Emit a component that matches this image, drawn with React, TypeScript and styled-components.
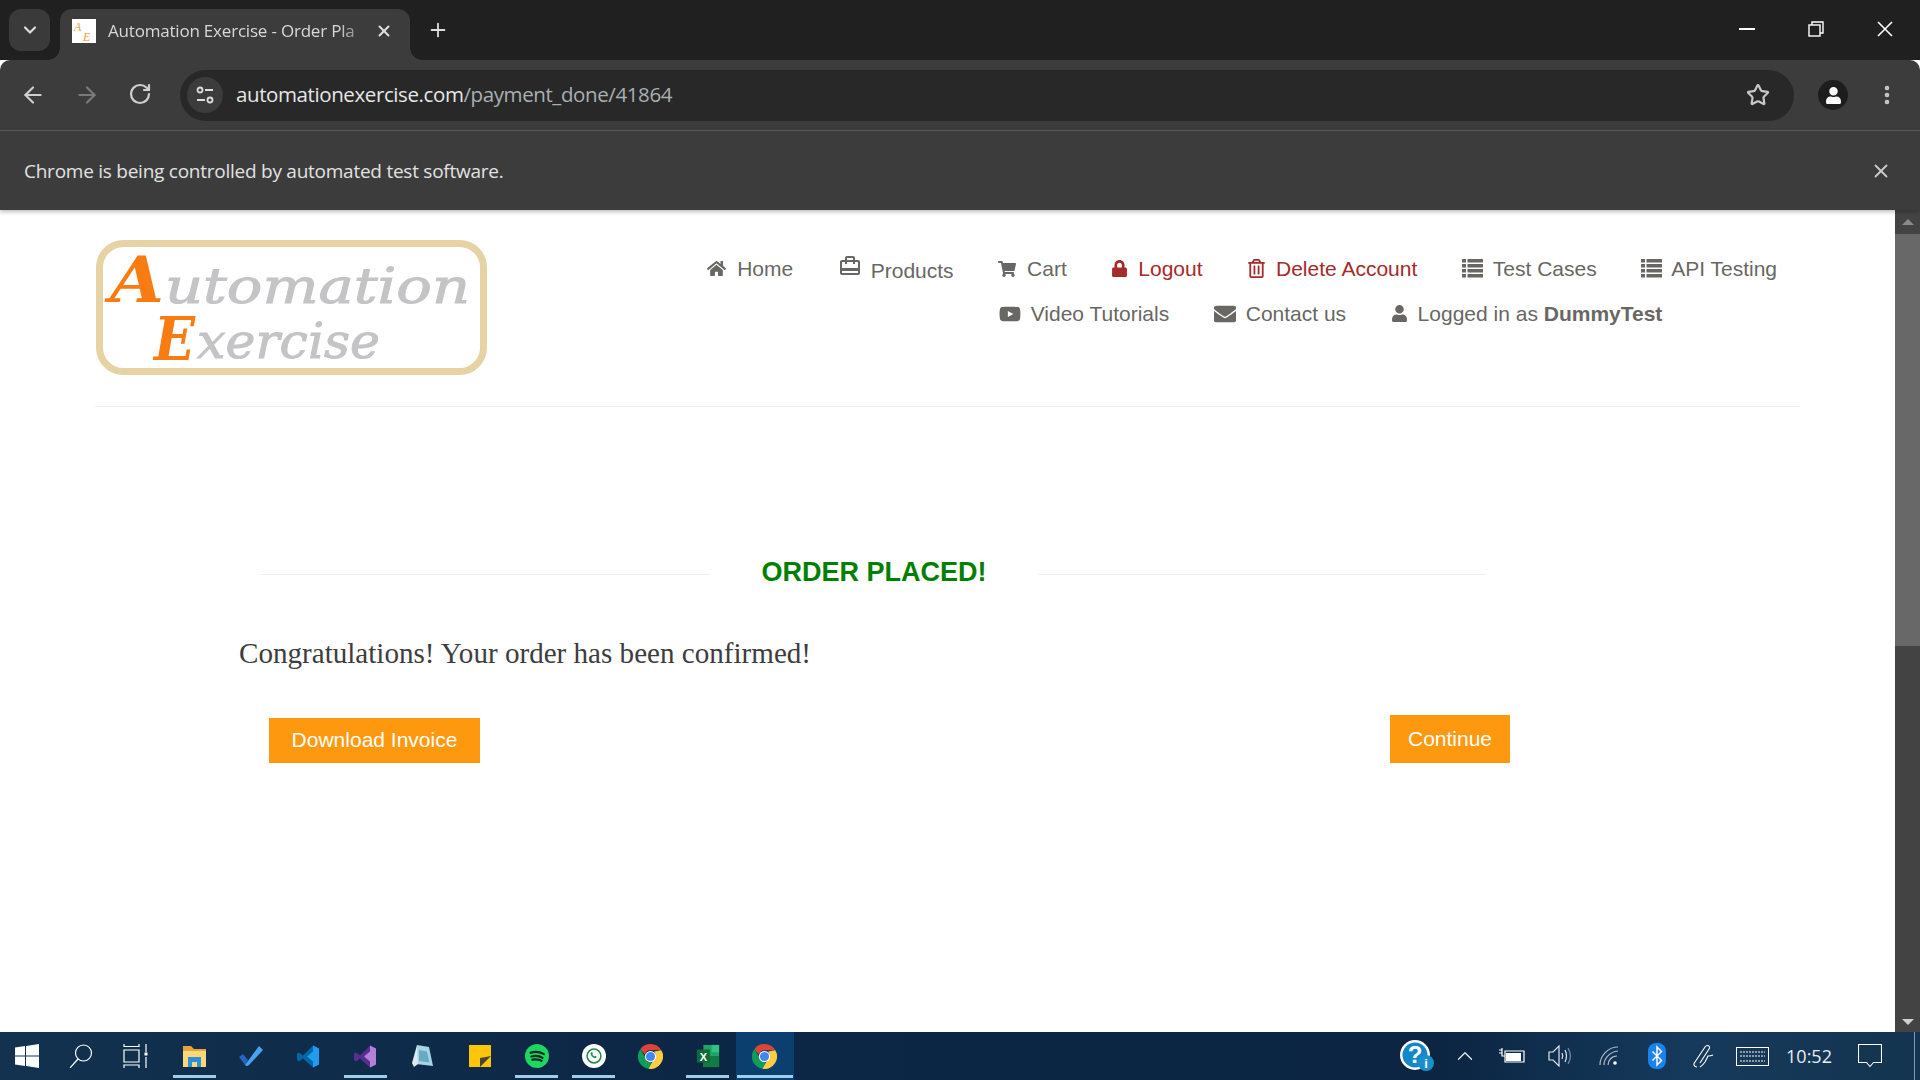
import * as React from 'react'
import styled, { createGlobalStyle } from 'styled-components'
import {
  FaHome,
  FaShoppingCart,
  FaLock,
  FaRegTrashAlt,
  FaYoutube,
  FaEnvelope,
  FaUser,
} from 'react-icons/fa'
import { MdOutlineCardTravel } from 'react-icons/md'
import { ChevronDown, X, Plus, ArrowLeft, ArrowRight, RotateCw, Star, EllipsisVertical, ChevronUp } from 'lucide-react'

const GlobalStyle = createGlobalStyle`
  html, body {
    margin: 0;
    padding: 0;
    height: 100%;
    overflow: hidden;
    background: #fff;
    font-family: "Liberation Sans", Arial, sans-serif;
  }
  #root { height: 100%; }
`

const Screen = styled.div`
  width: 1920px;
  height: 1080px;
  display: flex;
  flex-direction: column;
`

/* chrome */
const TabStrip = styled.div`
  height: 60px;
  background: #202020;
  display: flex;
  align-items: flex-start;
  flex: none;
`
const TabSearch = styled.div`
  width: 41px;
  height: 42px;
  margin: 9px 10px 0 9px;
  border-radius: 12px;
  background: #3a3a3a;
  color: #ddd;
  display: flex;
  align-items: center;
  justify-content: center;
  flex: none;
`
const Tab = styled.div`
  position: relative;
  width: 350px;
  height: 51px;
  margin-top: 9px;
  background: #3c3c3c;
  border-radius: 12px 12px 0 0;
  display: flex;
  align-items: center;
  padding: 0 17px 8px 12px;
  box-sizing: border-box;
  color: #d8d8d8;
  font: 17px "Open Sans", "Liberation Sans", sans-serif;
  letter-spacing: -0.2px;
  flex: none;
  &::before,
  &::after {
    content: '';
    position: absolute;
    bottom: 0;
    width: 12px;
    height: 12px;
  }
  &::before {
    left: -12px;
    background: radial-gradient(circle at 0 0, transparent 11.5px, #3c3c3c 12px);
  }
  &::after {
    right: -12px;
    background: radial-gradient(circle at 100% 0, transparent 11.5px, #3c3c3c 12px);
  }
`
const Favicon = styled.svg`
  width: 24px;
  height: 24px;
  flex: none;
  margin-right: 12px;
`
const TabTitle = styled.span`
  flex: 1;
  white-space: nowrap;
  -webkit-mask-image: linear-gradient(90deg, #000 86%, transparent 100%);
  mask-image: linear-gradient(90deg, #000 86%, transparent 100%);
`
const TabClose = styled(X)`
  flex: none;
  color: #e0e0e0;
`
const NewTab = styled.div`
  color: #ddd;
  margin: 19px 0 0 17px;
  flex: none;
`
const WinControls = styled.div`
  margin-left: auto;
  display: flex;
  align-items: center;
  gap: 53px;
  padding: 21px 27px 0 0;
`
const Toolbar = styled.div`
  height: 70px;
  background: #3c3c3c;
  border-bottom: 1px solid #5c5c5c;
  border-radius: 10px 10px 0 0;
  display: flex;
  align-items: center;
  padding-left: 20px;
  color: #c8c8c8;
  flex: none;
`
const NavBtn = styled.div<{ $dim?: boolean }>`
  width: 26px;
  height: 26px;
  margin-right: 28px;
  flex: none;
  color: ${(p) => (p.$dim ? '#7a7a7a' : '#cfcfcf')};
`
const Omnibox = styled.div`
  width: 1614px;
  height: 51px;
  margin-left: -2px;
  background: #282828;
  border-radius: 26px;
  display: flex;
  align-items: center;
  padding: 0 24px 0 7px;
  box-sizing: border-box;
  flex: none;
`
const SiteInfo = styled.div`
  width: 36px;
  height: 36px;
  border-radius: 50%;
  background: #3c3c3c;
  display: flex;
  align-items: center;
  justify-content: center;
  margin-right: 13px;
  flex: none;
`
const Url = styled.div`
  flex: 1;
  padding-bottom: 2px;
  font: 20.5px "Open Sans", "Liberation Sans", sans-serif;
  letter-spacing: -0.4px;
  color: #a9afb3;
  b {
    font-weight: 400;
    color: #e6e6e6;
  }
`
const Avatar = styled.div`
  width: 30px;
  height: 30px;
  border-radius: 50%;
  background: #1d1d1d;
  margin-left: 24px;
  flex: none;
  display: flex;
  align-items: center;
  justify-content: center;
`
const Kebab = styled.div`
  color: #c8c8c8;
  margin-left: 27px;
  flex: none;
  display: flex;
`
const InfoBar = styled.div`
  height: 79px;
  background: #3c3c3c;
  color: #e2e2e2;
  display: flex;
  align-items: center;
  justify-content: space-between;
  padding: 0 28px 0 24px;
  font: 19px "Open Sans", "Liberation Sans", sans-serif;
  letter-spacing: -0.25px;
  box-shadow: 0 2px 4px rgba(0, 0, 0, 0.25);
  position: relative;
  flex: none;
`

/* page */
const Viewport = styled.div`
  flex: 1;
  display: flex;
  min-height: 0;
`
const Page = styled.main`
  flex: 1;
  background: #fff;
  padding: 0 95px;
  min-width: 0;
`
const Header = styled.header`
  height: 197px;
  box-sizing: border-box;
  border-bottom: 1px solid #f0f0ef;
  display: flex;
  justify-content: space-between;
  padding-top: 30px;
`
const Logo = styled.svg`
  width: 391px;
  height: 135px;
  margin-left: 1px;
  flex: none;
`
const Nav = styled.nav`
  display: flex;
  flex-direction: column;
  gap: 20px;
  padding: 16px 23px 0 0;
  font-size: 21px;
  color: #696763;
`
const NavRow = styled.div<{ $indent?: number }>`
  display: flex;
  gap: 44.5px;
  height: 25px;
  align-items: center;
  margin-left: ${(p) => p.$indent ?? 0}px;
`
const NavItem = styled.a<{ $danger?: boolean; $gap?: number }>`
  display: flex;
  align-items: center;
  white-space: nowrap;
  gap: ${(p) => p.$gap ?? 10}px;
  color: ${(p) => (p.$danger ? '#a52a2a' : '#696763')};
  svg {
    flex: none;
  }
  b {
    font-weight: 700;
  }
`
const ProductsItem = styled(NavItem)`
  svg {
    transform: translateY(-3px);
  }
  span {
    transform: translateY(2px);
  }
`
const ListGlyph = styled.svg`
  width: 21px;
  height: 19px;
  fill: currentColor;
`
const Content = styled.section`
  padding: 150px 0 0 144px;
`
const TitleRow = styled.div`
  display: flex;
  align-items: center;
  width: 1225px;
  margin-left: 22px;
`
const Rule = styled.div<{ $w: number }>`
  width: ${(p) => p.$w}px;
  height: 1px;
  background: #eee;
  margin-top: 5px;
  flex: none;
`
const Title = styled.h2`
  margin: 0;
  width: 328px;
  flex: none;
  text-align: center;
  font-size: 27px;
  line-height: 30px;
  color: #008000;
  font-weight: 700;
`
const Message = styled.p`
  margin: 48px 0 0;
  font: 29.1px/36px "Liberation Serif", "Times New Roman", serif;
  color: #3d3d3d;
`
const Actions = styled.div`
  display: flex;
  justify-content: space-between;
  align-items: flex-end;
  width: 1241px;
  margin: 44px 0 0 30px;
`
const OrangeButton = styled.a<{ $h: number; $w: number; $lift?: number }>`
  width: ${(p) => p.$w}px;
  height: ${(p) => p.$h}px;
  box-sizing: border-box;
  padding-bottom: ${(p) => p.$lift ?? 0}px;
  background: #fe980f;
  color: #fff;
  font-size: 21px;
  display: flex;
  align-items: center;
  justify-content: center;
`
const Scrollbar = styled.div`
  width: 25px;
  background: #434343;
  flex: none;
  display: flex;
  flex-direction: column;
  align-items: center;
`
const ScrollArrow = styled.div<{ $down?: boolean }>`
  width: 0;
  height: 0;
  flex: none;
  border-left: 6px solid transparent;
  border-right: 6px solid transparent;
  margin: ${(p) => (p.$down ? 'auto 0 7px' : '9px 0 9px')};
  ${(p) => (p.$down ? 'border-top: 6px solid #d0d0d0;' : 'border-bottom: 6px solid #8a8a8a;')}
`
const ScrollThumb = styled.div`
  width: 100%;
  height: 412px;
  background: #686868;
`

/* taskbar */
const Taskbar = styled.footer`
  height: 48px;
  flex: none;
  background: linear-gradient(90deg, #12324f 0%, #0c2846 30%, #0b2644 50%, #0b2542 75%, #163a5c 88%, #14344f 100%);
  display: flex;
  align-items: stretch;
  color: #fff;
`
const TaskItem = styled.div<{ $w?: number; $on?: boolean; $active?: boolean }>`
  width: ${(p) => p.$w ?? 57.1}px;
  flex: none;
  display: flex;
  align-items: center;
  justify-content: center;
  position: relative;
  background: ${(p) => (p.$active ? '#0a3f70' : 'transparent')};
  ${(p) =>
    p.$on &&
    `&::after {
      content: '';
      position: absolute;
      left: ${p.$active ? 1 : 7}px;
      right: ${p.$active ? 1 : 7}px;
      bottom: 2px;
      height: 3px;
      background: #9fcdee;
    }`}
`
const PinnedGap = styled.div`
  width: 3.5px;
  flex: none;
`
const Tray = styled.div`
  margin-left: auto;
  display: flex;
  align-items: center;
  height: 100%;
`
const TrayIcon = styled.div<{ $w: number }>`
  width: ${(p) => p.$w}px;
  display: flex;
  align-items: center;
  justify-content: center;
  flex: none;
`
const Clock = styled.div`
  width: 68px;
  text-align: center;
  font: 18px "Open Sans", "Liberation Sans", sans-serif;
  color: #e6edf3;
  flex: none;
`
const ShowDesktop = styled.div`
  width: 1px;
  height: 100%;
  margin: 0 5px 0 17px;
  background: #7f97ad;
  flex: none;
`

const ChromeIcon = () => (
  <svg width="25" height="25" viewBox="4 4 40 40">
    <path fill="#db4437" d="M24 4a20 20 0 0 1 17.3 10H24a10 10 0 0 0-9.4 6.6L7.8 12A20 20 0 0 1 24 4z" />
    <path fill="#0f9d58" d="M7.8 12l8.8 15.2A10 10 0 0 0 27 33.5L20.7 43.7A20 20 0 0 1 7.8 12z" />
    <path fill="#ffcd40" d="M41.3 14A20 20 0 0 1 20.7 43.7L29.5 28.5A10 10 0 0 0 30 16z" />
    <circle cx="24" cy="24" r="9" fill="#fff" />
    <circle cx="24" cy="24" r="7.3" fill="#4285f4" />
  </svg>
)

const ListIcon = () => (
  <ListGlyph viewBox="0 0 21 19">
    <path d="M0 0h4v3.5H0zM5.5 0H21v3.5H5.5zM0 5h4v3.5H0zM5.5 5H21v3.5H5.5zM0 10h4v3.5H0zM5.5 10H21v3.5H5.5zM0 15h4v3.5H0zM5.5 15H21v3.5H5.5z" />
  </ListGlyph>
)

export default function App() {
  return (
    <Screen>
      <GlobalStyle />
      <TabStrip>
        <TabSearch>
          <ChevronDown size={20} strokeWidth={2.6} />
        </TabSearch>
        <Tab>
          <Favicon viewBox="0 0 24 24">
            <rect width="24" height="24" fill="#fff" />
            <text x="2" y="12" fontSize="12" fontStyle="italic" fontFamily="Liberation Serif" fill="#ef9b3c">A</text>
            <text x="11" y="22" fontSize="12" fontStyle="italic" fontFamily="Liberation Serif" fill="#ef9b3c">E</text>
          </Favicon>
          <TabTitle>Automation Exercise - Order Pla</TabTitle>
          <TabClose size={18} strokeWidth={2.6} />
        </Tab>
        <NewTab>
          <Plus size={22} strokeWidth={2} />
        </NewTab>
        <WinControls>
          <svg width="16" height="16" viewBox="0 0 16 16"><path d="M0 8h16" stroke="#fff" strokeWidth="2" /></svg>
          <svg width="16" height="16" viewBox="0 0 16 16" fill="none" stroke="#fff" strokeWidth="1.4"><rect x="1" y="4" width="11" height="11" /><path d="M4 4V1h11v11h-3" /></svg>
          <svg width="16" height="16" viewBox="0 0 16 16" stroke="#fff" strokeWidth="1.6"><path d="M1 1l14 14M15 1L1 15" /></svg>
        </WinControls>
      </TabStrip>
      <Toolbar>
        <NavBtn><ArrowLeft size={26} /></NavBtn>
        <NavBtn $dim><ArrowRight size={26} /></NavBtn>
        <NavBtn><RotateCw size={24} strokeWidth={2.2} /></NavBtn>
        <Omnibox>
          <SiteInfo>
            <svg width="20" height="20" viewBox="0 0 20 20" fill="none" stroke="#ddd" strokeWidth="1.8">
              <circle cx="5" cy="5" r="2.5" /><path d="M10 5h8M2 15h8" /><circle cx="15" cy="15" r="2.5" />
            </svg>
          </SiteInfo>
          <Url><b>automationexercise.com</b>/payment_done/41864</Url>
          <Star size={24} strokeWidth={2.2} color="#c8c8c8" />
        </Omnibox>
        <Avatar>
          <FaUser size={17} color="#fff" />
        </Avatar>
        <Kebab>
          <EllipsisVertical size={24} strokeWidth={2.6} />
        </Kebab>
      </Toolbar>
      <InfoBar>
        Chrome is being controlled by automated test software.
        <X size={22} strokeWidth={2} color="#ccc" />
      </InfoBar>
      <Viewport>
        <Page>
          <Header>
            <Logo viewBox="0 0 391 135">
              <rect x="3.5" y="3.5" width="384" height="128" rx="24" fill="#fff" stroke="#e6d3a3" strokeWidth="7" />
              <g fontFamily="DejaVu Serif" fontStyle="italic">
                <text x="69" y="63" fontSize="48" fill="#c4c4c6" stroke="#c4c4c6" strokeWidth="1" textLength="305" lengthAdjust="spacingAndGlyphs">utomation</text>
                <text x="101" y="118" fontSize="48" fill="#c4c4c6" stroke="#c4c4c6" strokeWidth="1" textLength="183" lengthAdjust="spacingAndGlyphs">xercise</text>
                <text x="14" y="62" fontSize="64" fontWeight="700" fill="#f97c12" textLength="54" lengthAdjust="spacingAndGlyphs">A</text>
                <text x="58" y="120" fontSize="60" fontWeight="700" fill="#f97c12" textLength="41" lengthAdjust="spacingAndGlyphs">E</text>
              </g>
            </Logo>
            <Nav>
              <NavRow>
                <NavItem $gap={11}><FaHome size={19} />Home</NavItem>
                <ProductsItem $gap={9}><MdOutlineCardTravel size={24} /><span>Products</span></ProductsItem>
                <NavItem $gap={11}><FaShoppingCart size={18} />Cart</NavItem>
                <NavItem $danger><FaLock size={17} />Logout</NavItem>
                <NavItem $danger><FaRegTrashAlt size={19} />Delete Account</NavItem>
                <NavItem><ListIcon />Test Cases</NavItem>
                <NavItem $gap={9}><ListIcon />API Testing</NavItem>
              </NavRow>
              <NavRow $indent={291.5}>
                <NavItem><FaYoutube size={22} />Video Tutorials</NavItem>
                <NavItem><FaEnvelope size={22} />Contact us</NavItem>
                <NavItem><FaUser size={17} /><span>Logged in as <b>DummyTest</b></span></NavItem>
              </NavRow>
            </Nav>
          </Header>
          <Content>
            <TitleRow>
              <Rule $w={449} />
              <Title>ORDER PLACED!</Title>
              <Rule $w={448} />
            </TitleRow>
            <Message>Congratulations! Your order has been confirmed!</Message>
            <Actions>
              <OrangeButton $w={211} $h={45} $lift={2}>Download Invoice</OrangeButton>
              <OrangeButton $w={120} $h={48}>Continue</OrangeButton>
            </Actions>
          </Content>
        </Page>
        <Scrollbar>
          <ScrollArrow />
          <ScrollThumb />
          <ScrollArrow $down />
        </Scrollbar>
      </Viewport>
      <Taskbar>
        <TaskItem $w={54}>
          <svg width="24" height="24" viewBox="0 0 24 24" fill="#fff"><path d="M0 3.5l10-1.4v9.400H0zM11 2l13-2v11.500H11zM0 12.500h10v9.500L0 20.500zM11 12.500h13V24l-13-2z" /></svg>
        </TaskItem>
        <TaskItem $w={54}>
          <svg width="24" height="24" viewBox="0 0 24 24" fill="none" stroke="#fff" strokeWidth="1.2"><circle cx="14.5" cy="9" r="8" /><path d="M9 15L1 24" /></svg>
        </TaskItem>
        <TaskItem $w={54}>
          <svg width="25" height="24" viewBox="0 0 25 24" fill="none" stroke="#fff" strokeWidth="1.2"><path d="M1 0v2.500h15V0M1 6h15v12H1zM1 24v-3h15v3M23 0v8M23 13v11" /><rect x="21.5" y="8.5" width="3" height="3" fill="#fff" stroke="none" /></svg>
        </TaskItem>
        <PinnedGap />
        <TaskItem $on>
          <svg width="23" height="21" viewBox="0 0 23 21"><path fill="#e8a33d" d="M0 0h8l3 3h12v18H0z" /><path fill="#fbd877" d="M0 5h23v16H0z" /><path fill="#2f8fd8" d="M5 11h13v10h-4v-5H9v5H5z" /></svg>
        </TaskItem>
        <TaskItem>
          <svg width="24" height="20" viewBox="0 0 24 20"><path fill="#2564c4" d="M0 11l4-3 5 6-3 5z" /><path fill="#4aa1f0" d="M20 0l4 4L10 19a3 3 0 0 1-4 0z" /></svg>
        </TaskItem>
        <TaskItem>
          <svg width="24" height="25" viewBox="0 0 24 24"><path fill="#0065a9" d="M17 1l6 3v16l-6 3-10-9-4 3-2-1.500V9L3 8l4 3z" /><path fill="#1f9cf0" d="M17 1l6 3v16l-6 3zM17 7l-6 5 6 5z" /></svg>
        </TaskItem>
        <TaskItem $on>
          <svg width="24" height="25" viewBox="0 0 24 24"><path fill="#5c2d91" d="M17 1l6 3v16l-6 3-10-9-4 3-2-1.500V9L3 8l4 3z" /><path fill="#b180d7" d="M17 1l6 3v16l-6 3zM17 7l-6 5 6 5z" /></svg>
        </TaskItem>
        <TaskItem>
          <svg width="23" height="24" viewBox="0 0 23 24"><path fill="#a8d5e5" d="M6 1l12 2 4 19-17-2z" /><path fill="#dfe9ee" d="M1 19L6 1l1 19-4 3z" /><path fill="#6aa9c2" d="M8 6l8 1.500 2.500 11L8 17z" /></svg>
        </TaskItem>
        <TaskItem>
          <svg width="22" height="22" viewBox="0 0 22 22"><path fill="#ffc50d" d="M0 0h22v22H0z" /><path fill="#4a4436" d="M11 13l11-2L11 22z" /></svg>
        </TaskItem>
        <TaskItem $on>
          <svg width="24" height="24" viewBox="0 0 26 26"><circle cx="13" cy="13" r="13" fill="#1ed760" /><path fill="none" stroke="#0f2a20" strokeWidth="2.4" strokeLinecap="round" d="M6 9.500c5-1.500 10-1 14.500 1.500M7 13.500c4-1 8.500-.7 12 1.500M8 17c3.500-.8 7-.5 10 1.200" /></svg>
        </TaskItem>
        <TaskItem $on>
          <svg width="24" height="24" viewBox="0 0 26 26"><circle cx="13" cy="13" r="13" fill="#fff" /><circle cx="13" cy="13" r="7.5" fill="none" stroke="#1f8a4c" strokeWidth="1.6" /><path fill="#1f8a4c" d="M9.500 9.500c1-1 2-.5 2.300.7l-.7 1c.5 1 1.200 1.700 2.300 2.300l1-.7c1.200.3 1.700 1.300.7 2.300-2.500 1-6.500-2.800-5.600-5.600z" /></svg>
        </TaskItem>
        <TaskItem><ChromeIcon /></TaskItem>
        <TaskItem $on>
          <svg width="24" height="24" viewBox="0 0 26 26"><path fill="#21a366" d="M8 1h17v24H8z" /><path fill="#107c41" d="M8 13h17v12H8z" /><path fill="#33c481" d="M17 1h8v8h-8z" /><rect x="1" y="6" width="14" height="14" fill="#0e6a38" /><text x="4" y="18" fontSize="12" fontWeight="700" fill="#fff" fontFamily="Liberation Sans">X</text></svg>
        </TaskItem>
        <TaskItem $on $active><ChromeIcon /></TaskItem>
        <Tray>
          <TrayIcon $w={48}>
            <svg width="36" height="34" viewBox="0 0 36 34"><circle cx="16" cy="16" r="15" fill="#fff" /><circle cx="16" cy="16" r="12.5" fill="#1287c9" /><text x="16" y="24" textAnchor="middle" fontSize="24" fontWeight="700" fill="#fff" fontFamily="Liberation Sans">?</text><circle cx="27" cy="24" r="8" fill="#1a8fce" /><text x="27" y="29" textAnchor="middle" fontSize="13" fontWeight="700" fill="#fff" fontFamily="Liberation Sans">i</text></svg>
          </TrayIcon>
          <TrayIcon $w={47}><ChevronUp size={26} strokeWidth={1.2} color="#e6edf3" /></TrayIcon>
          <TrayIcon $w={48}>
            <svg width="26" height="16" viewBox="0 0 26 16"><path fill="none" stroke="#fff" strokeWidth="1.2" d="M0 2h3M0 5h3M3 0v8h3M6 3h19v11H6z" /><rect x="7" y="5" width="15" height="8" fill="#fff" /></svg>
          </TrayIcon>
          <TrayIcon $w={48}>
            <svg width="24" height="22" viewBox="0 0 24 22" fill="none" stroke="#dfe7ee" strokeWidth="1.2"><path d="M1 7h4l6-6v20l-6-6H1z" /><path d="M14 8c1 2 1 4 0 6M17 5c2 4 2 8 0 12" /><path stroke="#7c8fa3" d="M20 3c3 5 3 11 0 16" /></svg>
          </TrayIcon>
          <TrayIcon $w={50}>
            <svg width="20" height="20" viewBox="0 0 20 20" fill="none" stroke="#aebccb" strokeWidth="1.2"><path d="M1 19C1 10 9 1 19 1M5 19c0-6 5-13 14-14M9 19c0-4 3-9 9-9" /><circle cx="16" cy="17" r="1.8" fill="#fff" stroke="none" /></svg>
          </TrayIcon>
          <TrayIcon $w={45}>
            <svg width="18" height="26" viewBox="0 0 18 26"><rect width="18" height="26" rx="8" fill="#1883f0" /><path fill="none" stroke="#fff" strokeWidth="1.5" d="M4.500 8.500l9 9L9 22V4l4.500 4.500-9 9" /></svg>
          </TrayIcon>
          <TrayIcon $w={50}>
            <svg width="22" height="24" viewBox="0 0 22 24" fill="none" stroke="#fff" strokeWidth="1.1"><path d="M4 23c-3 0-4-3-2-5L12 3c2-3 6-1 4 2L7 19M7 23c2-1 3-2 5-5l3-6c1 0 3 0 5-1" /></svg>
          </TrayIcon>
          <TrayIcon $w={46}>
            <svg width="33" height="19" viewBox="0 0 33 19" fill="none" stroke="#fff" strokeWidth="1"><rect x=".5" y=".5" width="32" height="18" /><path strokeDasharray="2 1" d="M4 5h25M4 9h25M4 14h25" /></svg>
          </TrayIcon>
          <Clock>10:52</Clock>
          <TrayIcon $w={54}>
            <svg width="24" height="25" viewBox="0 0 24 25" fill="none" stroke="#fff" strokeWidth="1.1"><path d="M.5.500h23v18h-8l-3.500 4-3.500-4h-8z" /></svg>
          </TrayIcon>
          <ShowDesktop />
        </Tray>
      </Taskbar>
    </Screen>
  )
}
